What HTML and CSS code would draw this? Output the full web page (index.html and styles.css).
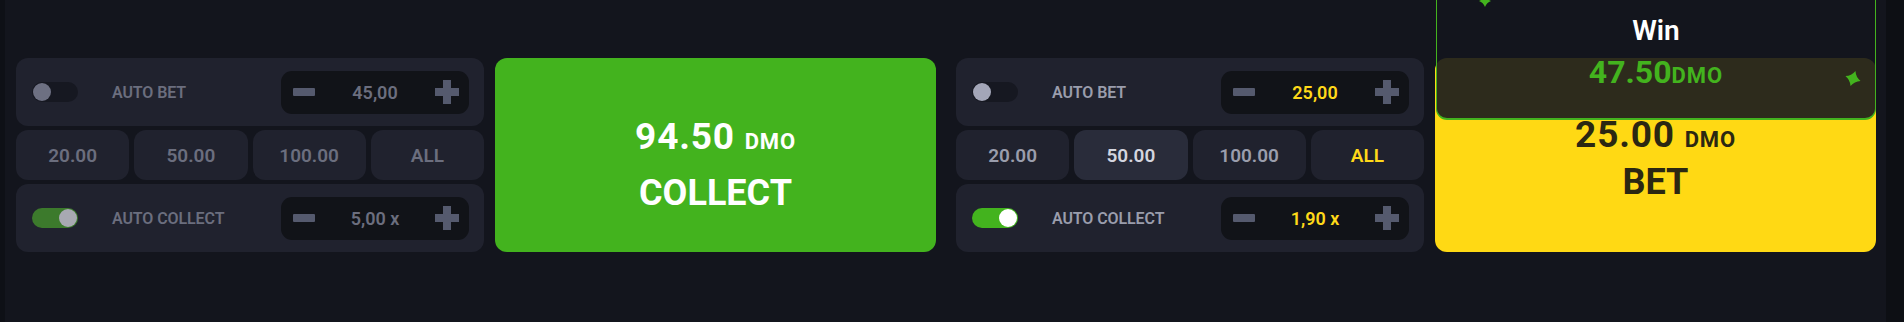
FILE: index.html
```html
<!DOCTYPE html>
<html lang="en">
<head>
<meta charset="utf-8">
<title>Bet panel</title>
<link rel="stylesheet" href="styles.css">
</head>
<body>
<div class="screen">
  <div class="edge edge-left"></div>
  <main class="bets">
    <section class="bet-group muted">
      <div class="controls">
        <div class="card">
          <span class="toggle"><span class="knob"></span></span>
          <span class="label">AUTO BET</span>
          <div class="stepper">
            <svg class="minus" width="22" height="8" viewBox="0 0 22 8"><rect width="22" height="8" rx="1"/></svg>
            <span class="value">45,00</span>
            <svg class="plus" width="24" height="24" viewBox="0 0 24 24"><path d="M8 0h8v8h8v8h-8v8H8v-8H0V8h8z"/></svg>
          </div>
        </div>
        <div class="presets">
          <button class="preset">20.00</button>
          <button class="preset">50.00</button>
          <button class="preset">100.00</button>
          <button class="preset">ALL</button>
        </div>
        <div class="card">
          <span class="toggle on"><span class="knob"></span></span>
          <span class="label">AUTO COLLECT</span>
          <div class="stepper">
            <svg class="minus" width="22" height="8" viewBox="0 0 22 8"><rect width="22" height="8" rx="1"/></svg>
            <span class="value">5,00 x</span>
            <svg class="plus" width="24" height="24" viewBox="0 0 24 24"><path d="M8 0h8v8h8v8h-8v8H8v-8H0V8h8z"/></svg>
          </div>
        </div>
      </div>
      <div class="action-wrap">
        <button class="action collect">
          <span class="amount">94.50 <small>DMO</small></span>
          <span class="word">COLLECT</span>
        </button>
      </div>
    </section>

    <section class="bet-group">
      <div class="controls">
        <div class="card">
          <span class="toggle"><span class="knob"></span></span>
          <span class="label">AUTO BET</span>
          <div class="stepper">
            <svg class="minus" width="22" height="8" viewBox="0 0 22 8"><rect width="22" height="8" rx="1"/></svg>
            <span class="value">25,00</span>
            <svg class="plus" width="24" height="24" viewBox="0 0 24 24"><path d="M8 0h8v8h8v8h-8v8H8v-8H0V8h8z"/></svg>
          </div>
        </div>
        <div class="presets">
          <button class="preset">20.00</button>
          <button class="preset selected">50.00</button>
          <button class="preset">100.00</button>
          <button class="preset all">ALL</button>
        </div>
        <div class="card">
          <span class="toggle on"><span class="knob"></span></span>
          <span class="label">AUTO COLLECT</span>
          <div class="stepper">
            <svg class="minus" width="22" height="8" viewBox="0 0 22 8"><rect width="22" height="8" rx="1"/></svg>
            <span class="value">1,90 x</span>
            <svg class="plus" width="24" height="24" viewBox="0 0 24 24"><path d="M8 0h8v8h8v8h-8v8H8v-8H0V8h8z"/></svg>
          </div>
        </div>
      </div>
      <div class="action-wrap">
        <button class="action bet">
          <span class="amount">25.00 <small>DMO</small></span>
          <span class="word">BET</span>
        </button>
        <div class="win-popup">
          <svg class="spark spark-top" width="12" height="24" viewBox="-1 -1 2 2"><path d="M0 -1Q0.28 -0.28 1 0Q0.28 0.28 0 1Q-0.28 0.28 -1 0Q-0.28 -0.28 0 -1Z"/></svg>
          <svg class="spark spark-right" width="16" height="27" viewBox="-1 -1 2 2"><path d="M0 -1Q0.28 -0.28 1 0Q0.28 0.28 0 1Q-0.28 0.28 -1 0Q-0.28 -0.28 0 -1Z"/></svg>
          <div class="win-title">Win</div>
          <div class="win-amount">47.50<small>DMO</small></div>
        </div>
      </div>
    </section>
  </main>
  <div class="edge edge-right"></div>
</div>
</body>
</html>
```

FILE: styles.css
```css
* { box-sizing: border-box; }

html, body {
  margin: 0;
  padding: 0;
  background: #13151d;
  overflow: hidden;
}

body {
  font-family: Roboto, "Liberation Sans", sans-serif;
}

.screen {
  display: flex;
  width: 1904px;
  height: 322px;
  background: #13151d;
  overflow: hidden;
}

.edge-left {
  width: 5px;
  background: #0e1016;
}

.edge-right {
  width: 18px;
  background: #0d0f14;
}

.bets {
  flex: 1;
  display: flex;
  gap: 20px;
  padding: 58px 10px 0 11px;
}

.bet-group {
  display: grid;
  grid-template-columns: 468px 441px;
  column-gap: 11px;
  height: 194px;
}

.controls {
  display: flex;
  flex-direction: column;
  gap: 4px;
}

.card {
  height: 68px;
  background: #20222e;
  border-radius: 12px;
  display: flex;
  align-items: center;
  padding: 0 15px 0 16px;
}

.toggle {
  position: relative;
  width: 46px;
  height: 20px;
  border-radius: 10px;
  background: #161821;
  margin-right: 34px;
  flex: none;
}

.toggle .knob {
  position: absolute;
  top: 1px;
  left: 1px;
  width: 18px;
  height: 18px;
  border-radius: 50%;
  background: #a3a6b8;
}

.toggle.on { background: #43b31e; }
.toggle.on .knob { left: auto; right: 1px; background: #ffffff; }

.muted .toggle .knob { background: #6d7082; }
.muted .toggle.on { background: #3c7a2c; }
.muted .toggle.on .knob { background: #a8a9b2; }

.label {
  flex: 1;
  font-size: 16px;
  font-weight: 600;
  color: #9a9dac;
  letter-spacing: -0.1px;
}

.muted .label { color: #6b6e7e; }

.stepper {
  width: 188px;
  height: 43px;
  background: #111318;
  border-radius: 11px;
  display: flex;
  align-items: center;
  padding: 0 10px 0 12px;
}

.stepper svg { fill: #555a6e; flex: none; }

.stepper .value {
  flex: 1;
  text-align: center;
  font-size: 18px;
  font-weight: 600;
  color: #ffd919;
}

.muted .stepper .value { color: #6b6e7e; }

.presets {
  display: grid;
  grid-template-columns: repeat(4, 1fr);
  gap: 5px;
  height: 50px;
}

.preset {
  border: 0;
  background: #20222e;
  border-radius: 12px;
  font-family: inherit;
  font-size: 19px;
  font-weight: 600;
  color: #9a9dac;
  padding: 0;
}

.preset.selected {
  background: #292c3a;
  color: #d3d5df;
}

.preset.all { color: #ffd919; }

.muted .preset { color: #6b6e7e; }

.action-wrap {
  position: relative;
}

.action {
  width: 100%;
  height: 194px;
  border: 0;
  border-radius: 12px;
  font-family: inherit;
  font-weight: 700;
  display: flex;
  flex-direction: column;
  align-items: center;
  justify-content: center;
  padding: 0;
}

.action .amount,
.action .word {
  display: block;
  font-size: 36px;
  line-height: 36px;
}

.action .amount {
  font-size: 37px;
  letter-spacing: 0.8px;
}

.action small {
  font-size: 22px;
  letter-spacing: 0.8px;
}

.collect {
  background: #43b31e;
  color: #ffffff;
  padding-top: 19px;
  gap: 15px;
}

.bet {
  background: #ffd914;
  color: #2b2712;
  padding-top: 7px;
  gap: 6px;
}

.win-popup {
  position: absolute;
  top: -70px;
  left: 1px;
  right: 0;
  height: 132px;
  background: rgba(19, 21, 29, 0.89);
  border: 1px solid #43b31e;
  border-bottom-width: 2px;
  border-radius: 0 0 11px 11px;
  text-align: center;
  color: #ffffff;
}

.win-title {
  margin-top: 28px;
  font-size: 28px;
  line-height: 28px;
  font-weight: 600;
}

.win-amount {
  margin-top: 11px;
  font-size: 32px;
  line-height: 32px;
  font-weight: 700;
  color: #43b31e;
}

.win-amount small {
  font-size: 22px;
  letter-spacing: 1px;
}

.spark {
  position: absolute;
  fill: #43b31e;
}

.spark-top {
  left: 42px;
  top: 0;
}

.spark-right {
  left: 408px;
  top: 76px;
  transform: rotate(18deg);
}
```
